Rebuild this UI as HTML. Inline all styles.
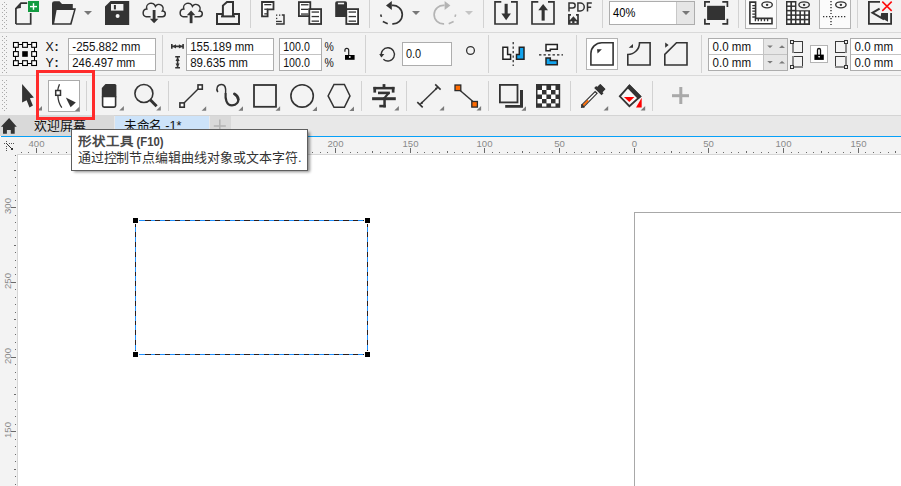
<!DOCTYPE html>
<html lang="zh-CN"><head><meta charset="utf-8">
<style>
html,body{margin:0;padding:0;width:901px;height:486px;overflow:hidden;background:#fff;}
body{position:relative;font-family:"Liberation Sans",sans-serif;}
svg{position:absolute;left:0;top:0;}
.t{font-family:"Liberation Sans",sans-serif;}
</style></head><body>
<svg width="901" height="486" viewBox="0 0 901 486" shape-rendering="crispEdges">
<defs>
<pattern id="grip" x="0" y="0" width="8" height="4" patternUnits="userSpaceOnUse">
<rect x="2" y="0" width="1" height="1" fill="#a9a9a9"/><rect x="6" y="0" width="1" height="1" fill="#a9a9a9"/><rect x="4" y="2" width="1" height="1" fill="#a9a9a9"/>
</pattern>
</defs>
<!-- toolbar backgrounds -->
<rect x="0" y="0" width="901" height="115" fill="#f3f3f3"/>
<rect x="0" y="32" width="901" height="1" fill="#d9d9d9"/>
<rect x="0" y="75" width="901" height="1" fill="#d9d9d9"/>
<rect x="0" y="2" width="8" height="28" fill="url(#grip)"/>
<rect x="0" y="36" width="8" height="37" fill="url(#grip)"/>
<rect x="0" y="79" width="8" height="33" fill="url(#grip)"/>

<!-- tab bar -->
<rect x="0" y="115" width="901" height="21" fill="#e8e8e8"/>
<rect x="0" y="115" width="114" height="21" fill="#d9d9d9"/>
<rect x="115" y="115" width="94" height="21" fill="#cde3f9"/>
<rect x="210" y="115" width="21" height="21" fill="#d9d9d9"/>
<rect x="114" y="115" width="787" height="1" fill="#d4d4d4"/>
<rect x="1" y="136" width="900" height="1" fill="#06a0f8"/>

<!-- rulers -->
<rect x="0" y="137" width="901" height="349" fill="#f3f3f3"/>
<rect x="18" y="155" width="883" height="331" fill="#ffffff"/>
<rect x="17" y="154" width="884" height="1" fill="#d6d6d6"/>
<rect x="17" y="154" width="1" height="332" fill="#d6d6d6"/>

<!-- page border -->
<rect x="634" y="212" width="267" height="1" fill="#a8a8a8"/>
<rect x="634" y="212" width="1" height="274" fill="#a8a8a8"/>


<!-- ROW 1 ICONS -->
<g shape-rendering="geometricPrecision">
<!-- new doc -->
<path d="M15.9,24 V8.6 L21,3.1 H27.2 M15.9,24 H30.7 V13" fill="none" stroke="#333" stroke-width="1.7"/>
<path d="M15.9,8.8 L20.9,3.4 V8 Z" fill="#333"/>
<rect x="28" y="1" width="11" height="11" fill="#129b40"/>
<rect x="30" y="5.9" width="7" height="1.4" fill="#fff"/>
<rect x="32.8" y="3.2" width="1.4" height="6.6" fill="#fff"/>
<!-- open folder -->
<path d="M52,3.6 Q52,1.2 54.5,1.2 H59.5 L62,4 H72.8 V8.3 H76 L71.5,24.8 H52 Z" fill="#333"/>
<path d="M56.6,9.9 H74 L70.2,23.2 H54.2 Z" fill="#f3f3f3"/>
<path d="M84,11 H92 L88,15 Z" fill="#777"/>
<!-- save -->
<path d="M110.6,1 H129.2 V24.9 H105 V6.6 Z" fill="#333"/>
<rect x="111" y="4" width="12.4" height="6.6" fill="#f3f3f3"/>
<rect x="113.9" y="5" width="2" height="4.4" fill="#333"/>
<circle cx="117.6" cy="16" r="2" fill="#f3f3f3"/>
<!-- cloud download -->
<path d="M150.6,16.7 H146.2 A3.9,3.9 0 0 1 146.8,9 A4.5,4.5 0 0 1 155.4,6.3 A4,4 0 0 1 162.4,10.9 A2.9,2.9 0 0 1 162.4,16.7 H157.4" fill="none" stroke="#333" stroke-width="1.5"/>
<rect x="152.7" y="10" width="2.8" height="9.5" fill="#333"/>
<path d="M149.8,18.8 H158.4 L154.1,23.3 Z" fill="#333"/>
<!-- cloud upload -->
<path d="M187.6,16.7 H183.2 A3.9,3.9 0 0 1 183.8,9 A4.5,4.5 0 0 1 192.4,6.3 A4,4 0 0 1 199.4,10.9 A2.9,2.9 0 0 1 199.4,16.7 H194.4" fill="none" stroke="#333" stroke-width="1.5"/>
<rect x="189.7" y="14.5" width="2.8" height="8.7" fill="#333"/>
<path d="M186.8,15.2 H195.4 L191.1,10.4 Z" fill="#333"/>
<!-- print -->
<rect x="217" y="14" width="22" height="10" fill="none" stroke="#333" stroke-width="2"/>
<path d="M222.9,16.3 V5.6 L227,1.9 H233 V16.3" fill="#f3f3f3" stroke="#333" stroke-width="2"/>
<rect x="221" y="15.4" width="14" height="2" fill="#333"/>
<!-- separator -->
<rect x="250" y="0" width="1" height="28" fill="#d2d2d2" shape-rendering="crispEdges"/>
<!-- cut -->
<path d="M262,2 H273.5 V9.3 H267.6 V16.4 H262 Z" fill="#fff" stroke="#333" stroke-width="1.8"/>
<rect x="264.3" y="4" width="7" height="1.3" fill="#333"/>
<rect x="264.3" y="8.6" width="3.5" height="1.3" fill="#333"/>
<rect x="264.3" y="13.2" width="3" height="1.3" fill="#333"/>
<rect x="276" y="14.5" width="1.3" height="1.3" fill="#333"/>
<rect x="279" y="14.5" width="1.3" height="1.3" fill="#333"/>
<rect x="276" y="17.8" width="1.3" height="1.3" fill="#333"/>
<path d="M281.8,15 H284 V24.1 H276" fill="none" stroke="#333" stroke-width="1.5"/>
<rect x="276" y="20.8" width="5.8" height="1.3" fill="#333"/>
<!-- copy -->
<rect x="298.9" y="2.1" width="11.4" height="14" fill="#fff" stroke="#333" stroke-width="1.8"/>
<rect x="301" y="4.1" width="7.5" height="1.3" fill="#333"/>
<rect x="301" y="8.7" width="7.5" height="1.3" fill="#333"/>
<rect x="301" y="13.4" width="7.5" height="1.3" fill="#333"/>
<rect x="309.3" y="9.1" width="11.8" height="14.9" fill="#fff" stroke="#333" stroke-width="1.8"/>
<rect x="311.6" y="11.4" width="7.4" height="1.3" fill="#333"/>
<rect x="311.6" y="15.9" width="7.4" height="1.3" fill="#333"/>
<rect x="311.6" y="20.5" width="7.4" height="1.3" fill="#333"/>
<!-- paste -->
<path d="M335.2,3 Q335.2,1.2 337,1.2 H345.2 Q347,1.2 347,3 V16.9 H335.2 Z" fill="#333"/>
<rect x="337.9" y="2.7" width="6.2" height="1.6" fill="#f3f3f3"/>
<rect x="346.3" y="9.1" width="11.8" height="14.9" fill="#fff" stroke="#333" stroke-width="1.8"/>
<rect x="348.6" y="11.4" width="7.4" height="1.3" fill="#333"/>
<rect x="348.6" y="15.9" width="7.4" height="1.3" fill="#333"/>
<rect x="348.6" y="20.5" width="7.4" height="1.3" fill="#333"/>
<rect x="369" y="0" width="1" height="28" fill="#d2d2d2" shape-rendering="crispEdges"/>
<!-- undo -->
<path d="M391.8,5.4 A9.3,9.3 0 1 1 392.3,23.9" fill="none" stroke="#333" stroke-width="1.7"/>
<path d="M382.8,21.5 L387.7,23.8 M380.7,14.5 L381.4,16.9" fill="none" stroke="#333" stroke-width="1.6"/>
<path d="M386,5.5 L391.8,0.9 V9.9 Z" fill="#333"/>
<path d="M412,11 H420 L416,15 Z" fill="#777"/>
<!-- redo (grey) -->
<path d="M444.6,5.4 A9.3,9.3 0 1 0 444.1,23.9" fill="none" stroke="#b4b4b4" stroke-width="1.7"/>
<path d="M453.6,21.5 L448.7,23.8 M455.7,14.5 L455,16.9" fill="none" stroke="#b4b4b4" stroke-width="1.6"/>
<path d="M450.4,5.5 L444.6,0.9 V9.9 Z" fill="#b4b4b4"/>
<path d="M465,11 H473 L469,15 Z" fill="#c4c4c4"/>
<rect x="483" y="0" width="1" height="28" fill="#d2d2d2" shape-rendering="crispEdges"/>
<!-- import -->
<path d="M501.3,1.9 H495 V24 H517 V1.9 H511" fill="none" stroke="#333" stroke-width="1.65"/>
<rect x="504.6" y="3.8" width="3.1" height="11" fill="#333"/>
<path d="M501.4,13.6 H510.9 L506.15,20.3 Z" fill="#333"/>
<!-- export -->
<path d="M538.3,1.9 H532 V24 H554 V1.9 H548" fill="none" stroke="#333" stroke-width="1.65"/>
<rect x="541.6" y="9.5" width="3.1" height="11.1" fill="#333"/>
<path d="M538.3,10.2 H548 L543.15,3.9 Z" fill="#333"/>
</g>

<!-- ROW 1 part 2 -->
<g shape-rendering="geometricPrecision">
<!-- PDF -->
<path d="M569,11.6 V3.1 H572.6 A2.55,2.5 0 0 1 572.6,8.1 H569 M577.9,11 V3.1 H580.3 A3.95,3.95 0 0 1 580.3,11 Z M587.5,11.6 V3.1 H591.8 M587.5,7.3 H591.2" fill="none" stroke="#333" stroke-width="1.5"/>
<path d="M571,14.9 H568.9 V24 H578 V14.9 H576" fill="none" stroke="#333" stroke-width="1.7"/>
<path d="M569.8,20.2 L573.4,16.3 L577,20.2 Z" fill="#333"/><rect x="569" y="20" width="9" height="3.6" fill="#333"/>
<rect x="570.5" y="21.3" width="1.7" height="1.7" fill="#f3f3f3"/>
<rect x="574.5" y="21.3" width="2" height="1.7" fill="#f3f3f3"/>
<rect x="602" y="0" width="1" height="28" fill="#d2d2d2" shape-rendering="crispEdges"/>
<!-- zoom combo -->
<rect x="609.5" y="1.5" width="85" height="23" fill="#fff" stroke="#adadad" stroke-width="1" shape-rendering="crispEdges"/>
<rect x="677" y="2" width="17" height="22" fill="#e6e6e6" shape-rendering="crispEdges"/>
<rect x="676" y="2" width="1" height="22" fill="#c8c8c8" shape-rendering="crispEdges"/>
<path d="M682,11.1 H690 L686,15 Z" fill="#777"/>
<text x="613" y="17.2" font-size="12.6" fill="#000" textLength="22.3" lengthAdjust="spacingAndGlyphs" class="t">40%</text>
<!-- full page -->
<path d="M710,1.9 H704.9 V7 M722.3,1.9 H727.4 V7 M704.9,18.8 V23.9 H710 M727.4,18.8 V23.9 H722.3" fill="none" stroke="#333" stroke-width="1.7"/>
<rect x="707.1" y="5.8" width="17.9" height="14.2" fill="#333"/>
<rect x="738" y="0" width="1" height="28" fill="#d2d2d2" shape-rendering="crispEdges"/>
<!-- ruler button -->
<rect x="745.5" y="-2" width="31" height="30.5" fill="#fbfbfb" stroke="#b4b4b4" stroke-width="1" shape-rendering="crispEdges"/>
<path d="M749.9,2.1 H755.6 V18.4 H772 V23.8 H749.9 Z" fill="#fff" stroke="#333" stroke-width="1.6"/>
<path d="M752.3,5.6 H755.6 M752.3,8.4 H755.6 M752.3,11.2 H755.6 M752.3,14.1 H755.6 M752.3,17 H755.6 M755.4,18.4 V21.3 M758.3,18.4 V21.3 M761.3,18.4 V21.3 M764.5,18.4 V21.3 M767.6,18.4 V21.3" fill="none" stroke="#333" stroke-width="1.3"/>
<ellipse cx="767.1" cy="4.85" rx="5.2" ry="3" fill="none" stroke="#333" stroke-width="1.4"/>
<circle cx="767.1" cy="4.85" r="1.2" fill="#333"/>
<!-- grid -->
<path d="M786,1.1 H796.4 V10.3 H810 V24.9 H786 Z" fill="#333"/>
<g fill="#fff"><rect x="787.45" y="2.55" width="2.9" height="2.9"/><rect x="792.05" y="2.55" width="2.9" height="2.9"/><rect x="787.45" y="6.95" width="2.9" height="2.9"/><rect x="792.05" y="6.95" width="2.9" height="2.9"/><rect x="787.45" y="11.45" width="2.9" height="2.9"/><rect x="792.05" y="11.45" width="2.9" height="2.9"/><rect x="796.45" y="11.45" width="2.9" height="2.9"/><rect x="800.95" y="11.45" width="2.9" height="2.9"/><rect x="805.35" y="11.45" width="2.9" height="2.9"/><rect x="787.45" y="15.85" width="2.9" height="2.9"/><rect x="792.05" y="15.85" width="2.9" height="2.9"/><rect x="796.45" y="15.85" width="2.9" height="2.9"/><rect x="800.95" y="15.85" width="2.9" height="2.9"/><rect x="805.35" y="15.85" width="2.9" height="2.9"/><rect x="787.45" y="20.35" width="2.9" height="2.9"/><rect x="792.05" y="20.35" width="2.9" height="2.9"/><rect x="796.45" y="20.35" width="2.9" height="2.9"/><rect x="800.95" y="20.35" width="2.9" height="2.9"/><rect x="805.35" y="20.35" width="2.9" height="2.9"/></g>
<ellipse cx="804.1" cy="4.85" rx="5.2" ry="3" fill="#f3f3f3" stroke="#333" stroke-width="1.4"/>
<circle cx="804.1" cy="4.85" r="1.2" fill="#333"/>
<!-- guidelines button -->
<rect x="819.5" y="-2" width="31" height="30.5" fill="#fbfbfb" stroke="#b4b4b4" stroke-width="1" shape-rendering="crispEdges"/>
<path d="M831,1 V14 M831,18 V25" fill="none" stroke="#333" stroke-width="1.4" stroke-dasharray="1.3,1.7"/>
<path d="M823,16.6 H847" fill="none" stroke="#333" stroke-width="1.3" stroke-dasharray="1.3,1.7"/>
<ellipse cx="840.9" cy="4.85" rx="5.2" ry="3" fill="none" stroke="#333" stroke-width="1.4"/>
<circle cx="840.9" cy="4.85" r="1.2" fill="#333"/>
<rect x="857" y="0" width="1" height="28" fill="#d2d2d2" shape-rendering="crispEdges"/>
</g>

<g shape-rendering="geometricPrecision">
<path d="M880,1.9 H868.9 V23.9 H891.1 V13" fill="none" stroke="#333" stroke-width="1.8"/>
<path d="M879.6,8.7 L872.4,12.8 L884,19.3" fill="none" stroke="#333" stroke-width="1.9"/>
<path d="M881.2,13.1 H888 V21.8 L880.5,17.6 Z" fill="#333"/>
<path d="M882.3,1.6 L891.7,10.9 M891.7,1.6 L882.3,10.9" stroke="#ff0a0a" stroke-width="1.5"/>
</g>

<!-- ROW 2 -->
<g shape-rendering="geometricPrecision">
<!-- reference point icon -->
<path d="M16,44.5 H34 M16,63.5 H34 M15.5,45 V63 M34.5,45 V63" stroke="#000" stroke-width="1" fill="none" shape-rendering="crispEdges"/>
<g fill="#fff" stroke="#000" stroke-width="1.1">
<rect x="13.5" y="42.5" width="4.8" height="4.8"/><rect x="22.6" y="42.5" width="4.8" height="4.8"/><rect x="31.7" y="42.5" width="4.8" height="4.8"/>
<rect x="13.5" y="51.6" width="4.8" height="4.8"/><rect x="31.7" y="51.6" width="4.8" height="4.8"/>
<rect x="13.5" y="60.7" width="4.8" height="4.8"/><rect x="22.6" y="60.7" width="4.8" height="4.8"/><rect x="31.7" y="60.7" width="4.8" height="4.8"/>
</g>
<rect x="22.2" y="51.2" width="5.6" height="5.6" fill="#000"/>
<text x="45.6" y="51" font-size="12.3" fill="#111" class="t">X</text>
<text x="54.6" y="51" font-size="12.3" font-weight="bold" fill="#111" class="t">:</text>
<text x="45.6" y="67" font-size="12.3" fill="#111" class="t">Y</text>
<text x="54.6" y="67" font-size="12.3" font-weight="bold" fill="#111" class="t">:</text>
</g>
<g shape-rendering="crispEdges">
<!-- XY input -->
<rect x="68.5" y="38.5" width="87" height="31.5" fill="#fff" stroke="#adadad"/>
<rect x="69" y="54" width="86" height="1" fill="#c3c3c3"/>
<rect x="162" y="35" width="1" height="38" fill="#d2d2d2"/>
<rect x="186.5" y="38.5" width="87" height="31.5" fill="#fff" stroke="#adadad"/>
<rect x="187" y="54" width="86" height="1" fill="#c3c3c3"/>
<rect x="279.5" y="38.5" width="42" height="31.5" fill="#fff" stroke="#adadad"/>
<rect x="280" y="54" width="41" height="1" fill="#c3c3c3"/>
<rect x="365" y="35" width="1" height="38" fill="#d2d2d2"/>
<rect x="402.5" y="42.5" width="49" height="23" fill="#fff" stroke="#adadad"/>
<rect x="488" y="35" width="1" height="38" fill="#d2d2d2"/>
<rect x="576" y="35" width="1" height="38" fill="#d2d2d2"/>
<rect x="586.5" y="38.5" width="31" height="31" fill="#fff" stroke="#b4b4b4"/>
<rect x="701" y="35" width="1" height="38" fill="#d2d2d2"/>
<rect x="708.5" y="38.5" width="79" height="31.5" fill="#fff" stroke="#adadad"/>
<rect x="764" y="39" width="23" height="31" fill="#e6e6e6"/>
<rect x="763" y="39" width="1" height="31" fill="#c3c3c3"/>
<rect x="709" y="54" width="78" height="1" fill="#c3c3c3"/>
<rect x="810.5" y="45.5" width="17" height="17" fill="#fff" stroke="#b4b4b4"/>
<rect x="850.5" y="38.5" width="60" height="31.5" fill="#fff" stroke="#adadad"/>
<rect x="851" y="54" width="60" height="1" fill="#c3c3c3"/>
</g>
<g class="t" font-size="12" fill="#111">
<text x="72.3" y="50.6" textLength="68" lengthAdjust="spacingAndGlyphs">-255.882 mm</text>
<text x="72.3" y="66.7" textLength="63" lengthAdjust="spacingAndGlyphs">246.497 mm</text>
<text x="190.2" y="50.6" textLength="63.6" lengthAdjust="spacingAndGlyphs">155.189 mm</text>
<text x="190.2" y="66.7" textLength="57.7" lengthAdjust="spacingAndGlyphs">89.635 mm</text>
<text x="283.2" y="50.6" textLength="26.6" lengthAdjust="spacingAndGlyphs">100.0</text>
<text x="283.2" y="66.7" textLength="26.6" lengthAdjust="spacingAndGlyphs">100.0</text>
<text x="324.6" y="51" textLength="9.3" lengthAdjust="spacingAndGlyphs">%</text>
<text x="324.6" y="66.8" textLength="9.3" lengthAdjust="spacingAndGlyphs">%</text>
<text x="406" y="57.9" textLength="15.2" lengthAdjust="spacingAndGlyphs">0.0</text>
<text x="712.5" y="50.6" textLength="38.5" lengthAdjust="spacingAndGlyphs">0.0 mm</text>
<text x="712.5" y="66.7" textLength="38.5" lengthAdjust="spacingAndGlyphs">0.0 mm</text>
<text x="854.5" y="50.6" textLength="38.5" lengthAdjust="spacingAndGlyphs">0.0 mm</text>
<text x="854.5" y="66.7" textLength="38.5" lengthAdjust="spacingAndGlyphs">0.0 mm</text>
</g>
<g shape-rendering="geometricPrecision">
<!-- W/H icons -->
<path d="M171.8,44 V48.8 M183.1,44 V48.8 M172,46.4 H183" stroke="#333" stroke-width="1.6" fill="none"/>
<path d="M172.5,46.4 L176,44.3 V48.5 Z M182.4,46.4 L178.9,44.3 V48.5 Z" fill="#333"/>
<path d="M175.2,56.8 H180 M175.2,67.8 H180 M177.6,57 V67.6" stroke="#333" stroke-width="1.6" fill="none"/>
<path d="M177.6,57.6 L175.5,61 H179.7 Z M177.6,67 L175.5,63.6 H179.7 Z" fill="#333"/>
<!-- lock open -->
<path d="M344.9,51.8 V50.3 A1.9,1.9 0 0 1 348.7,50.3 V55.5" fill="none" stroke="#222" stroke-width="1.2"/>
<rect x="345" y="55" width="9.6" height="4.8" fill="#000"/>
<circle cx="349.8" cy="57" r="0.9" fill="#fff"/>
<!-- rotate -->
<path d="M381.5,56.3 A6.6,6.6 0 1 1 383.4,59.3" fill="none" stroke="#333" stroke-width="1.4"/>
<path d="M379.2,54.1 H384.3 L381.5,57.6 Z" fill="#333"/>
<circle cx="470.5" cy="50.5" r="3.9" fill="none" stroke="#333" stroke-width="1.3"/>
<!-- mirror H -->
<path d="M502.9,47.3 H507.6 V54.5 H510.6 V59.2 H502.9 Z" fill="#fff" stroke="#222" stroke-width="1.5"/>
<path d="M524,47.3 H519.3 V54.5 H516.5 V59.2 H524 Z" fill="#12a4ee" stroke="#222" stroke-width="1.5"/>
<path d="M513.2,42 V66" stroke="#222" stroke-width="1.2" stroke-dasharray="2.2,2.3" fill="none"/>
<!-- mirror V -->
<path d="M546,44.4 H557.3 V49.3 H550.3 V50.8 H546 Z" fill="#fff" stroke="#222" stroke-width="1.5"/>
<path d="M546,58 H550.3 V60.5 H557.3 V64.8 H546 Z" fill="#12a4ee" stroke="#222" stroke-width="1.5"/>
<path d="M539,54.8 H563" stroke="#222" stroke-width="1.2" stroke-dasharray="2.4,2.1" fill="none"/>
<!-- corner round -->
<path d="M590.9,65 V53.6 A10.9,10.9 0 0 1 601.8,42.7 H613.1 V65 Z" fill="none" stroke="#333" stroke-width="1.6"/>
<path d="M597,49.3 H601.9 L597.6,53.5 Z" fill="#333"/>
<!-- scallop -->
<path d="M627.8,65 V54.5 A11.7,11.7 0 0 0 639.5,42.7 H650.1 V65 Z" fill="none" stroke="#333" stroke-width="1.6"/>
<path d="M628.7,47.8 H633 V43.9 Z" fill="#333"/>
<!-- chamfer -->
<path d="M664.8,65 V54.4 L676.5,42.7 H687 V65 Z" fill="none" stroke="#333" stroke-width="1.6"/>
<path d="M665.2,42.6 L668.6,45.1 L665.2,47.7 Z" fill="#333"/>
<!-- spinner arrows -->
<path d="M767.2,45.4 H772.8 L770,48 Z M779,48 H785 L782,45.3 Z M767.2,61 H772.8 L770,63.6 Z M779,63.6 H785 L782,60.9 Z" fill="#7a7a7a"/>
<!-- corner icons left -->
<g shape-rendering="crispEdges">
<rect x="792" y="41" width="11" height="1" fill="#3a3a3a"/><rect x="802" y="41" width="1" height="12" fill="#3a3a3a"/><rect x="792" y="52" width="11" height="1" fill="#3a3a3a"/><rect x="792" y="41" width="2" height="12" fill="#8c8c8c"/>
<rect x="790.5" y="40.5" width="3" height="3" fill="#eee" stroke="#333"/>
<rect x="792" y="56" width="11" height="1" fill="#3a3a3a"/><rect x="802" y="56" width="1" height="12" fill="#3a3a3a"/><rect x="792" y="66" width="11" height="2" fill="#8c8c8c"/><rect x="792" y="56" width="2" height="12" fill="#8c8c8c"/>
<rect x="790.5" y="65.5" width="3" height="3" fill="#eee" stroke="#333"/>
</g>
<!-- lock closed -->
<path d="M817.5,55.5 V50 A1.5,1.5 0 0 1 820.5,50 V55.5" fill="none" stroke="#111" stroke-width="1.3"/>
<rect x="814.4" y="54.6" width="9.4" height="5.3" fill="#000"/>
<path d="M818.1,56 H820.1 L819.1,58.3 Z" fill="#fff"/>
<!-- corner icons right -->
<g shape-rendering="crispEdges">
<rect x="835" y="41" width="11" height="1" fill="#3a3a3a"/><rect x="835" y="41" width="1" height="12" fill="#3a3a3a"/><rect x="835" y="52" width="11" height="1" fill="#3a3a3a"/><rect x="845" y="41" width="2" height="12" fill="#8c8c8c"/>
<rect x="844.5" y="40.5" width="3" height="3" fill="#eee" stroke="#333"/>
<rect x="835" y="56" width="11" height="1" fill="#3a3a3a"/><rect x="835" y="56" width="1" height="12" fill="#3a3a3a"/><rect x="835" y="66" width="12" height="2" fill="#8c8c8c"/><rect x="845" y="56" width="2" height="12" fill="#8c8c8c"/>
<rect x="844.5" y="65.5" width="3" height="3" fill="#eee" stroke="#333"/>
</g>
</g>

<!-- ROW 3 -->
<g shape-rendering="crispEdges">
<rect x="86" y="81" width="1" height="30" fill="#d2d2d2"/>
<rect x="168" y="81" width="1" height="30" fill="#d2d2d2"/>
<rect x="361" y="81" width="1" height="30" fill="#d2d2d2"/>
<rect x="406" y="81" width="1" height="30" fill="#d2d2d2"/>
<rect x="488" y="81" width="1" height="30" fill="#d2d2d2"/>
<rect x="570" y="81" width="1" height="30" fill="#d2d2d2"/>
<rect x="652" y="81" width="1" height="30" fill="#d2d2d2"/>
<rect x="48.5" y="80.5" width="31" height="31" fill="#fff" stroke="#ababab"/>
</g>
<g shape-rendering="geometricPrecision">
<!-- pick -->
<path d="M22.1,83.9 L33.9,97.6 L29.9,98.3 L32.9,105.6 L29.5,107.4 L26.6,100.3 L22.1,102.5 Z" fill="#333"/>
<path d="M37.4,110.6 L42.0,106.1 V110.6 Z" fill="#7b7b7b"/>
<!-- shape tool -->
<path d="M59.5,84.3 C58.8,86 58,88 57.8,90" fill="none" stroke="#333" stroke-width="1.3"/>
<path d="M57.9,95.8 C58,100 59.5,104.5 61.8,107.6" fill="none" stroke="#333" stroke-width="1.3"/>
<rect x="55.7" y="90.5" width="4.8" height="4.8" fill="#fff" stroke="#333" stroke-width="1.5"/>
<path d="M65.8,97.6 L75.8,102.4 L70.6,107.3 Z" fill="#333"/>
<path d="M74.9,111 L79.5,106.5 V111 Z" fill="#7b7b7b"/>
<!-- eraser -->
<path d="M102.6,96.5 V105.6 Q102.6,107.1 104.1,107.1 H114.1 Q115.6,107.1 115.6,105.6 V96.5" fill="#fff" stroke="#333" stroke-width="1.6"/>
<path d="M105.5,84.1 H114.9 Q116.4,84.1 116.4,85.6 V97.2 H101.8 V88.1 Z" fill="#333"/>
<path d="M119.3,110.6 L123.89999999999999,106.1 V110.6 Z" fill="#7b7b7b"/>
<!-- zoom -->
<circle cx="143.9" cy="93.5" r="9" fill="none" stroke="#333" stroke-width="1.6"/>
<path d="M150.2,99.8 L156.6,106.2" stroke="#333" stroke-width="3"/>
<path d="M156.2,110.6 L160.79999999999998,106.1 V110.6 Z" fill="#7b7b7b"/>
<!-- freehand -->
<path d="M183.5,103.6 L198.6,88.5" stroke="#333" stroke-width="1.4"/>
<rect x="179.9" y="102.9" width="4.4" height="4.3" fill="#fff" stroke="#333" stroke-width="1.6"/>
<rect x="198" y="84.9" width="4.3" height="4.3" fill="#fff" stroke="#333" stroke-width="1.6"/>
<path d="M201.6,110.8 L206.2,106.3 V110.8 Z" fill="#7b7b7b"/>
<!-- artistic -->
<path d="M217.8,92.2 C215.6,88.5 217.5,84.6 221.5,84.6 C225.5,84.6 226,88.5 225.6,93" fill="none" stroke="#333" stroke-width="1.5"/>
<path d="M225.6,93 C225.2,98 226,105.3 232,105.3 C237,105.3 238.5,101.5 238.3,99.3" fill="none" stroke="#333" stroke-width="2.2"/>
<path d="M238.3,99.3 C238,96.8 236.2,95 234.4,93.9" fill="none" stroke="#333" stroke-width="2.8" stroke-linecap="round"/>
<path d="M238.4,110.8 L243.0,106.3 V110.8 Z" fill="#7b7b7b"/>
<!-- rectangle -->
<rect x="254" y="85" width="22" height="21.8" fill="none" stroke="#333" stroke-width="1.8"/>
<path d="M275.5,110.8 L280.1,106.3 V110.8 Z" fill="#7b7b7b"/>
<!-- ellipse -->
<circle cx="302.1" cy="95.9" r="11.2" fill="none" stroke="#333" stroke-width="1.6"/>
<path d="M312.4,110.9 L317.0,106.4 V110.9 Z" fill="#7b7b7b"/>
<!-- polygon -->
<path d="M334,84.5 H344.4 L350,95.9 L344.4,107.3 H334 L328.1,95.9 Z" fill="none" stroke="#333" stroke-width="1.5"/>
<path d="M349.4,110.9 L354.0,106.4 V110.9 Z" fill="#7b7b7b"/>
<!-- text 字 -->
<g fill="#333">
<rect x="382.6" y="84.1" width="2.8" height="3.2"/>
<rect x="373.4" y="86.9" width="21.1" height="2.5"/>
<rect x="373.4" y="86.9" width="2.7" height="5.7"/>
<rect x="391.8" y="86.9" width="2.7" height="5.7"/>
<rect x="378" y="91.6" width="11.9" height="2.6"/>
<path d="M387,93.3 L390,93.3 L385.8,98 L383.1,98 Z"/>
<rect x="372.1" y="97.2" width="23.7" height="3"/>
<rect x="383.3" y="97.2" width="2.5" height="10.2"/>
<rect x="379.3" y="104.8" width="6.5" height="2.6"/>
</g>
<path d="M394.3,110.6 L398.90000000000003,106.1 V110.6 Z" fill="#7b7b7b"/>
<!-- dimension -->
<path d="M420,104.6 L438,86.9" stroke="#333" stroke-width="1.4"/><circle cx="421.8" cy="102.9" r="1.1" fill="#333"/><circle cx="436.2" cy="88.6" r="1.1" fill="#333"/>
<path d="M435.2,84.4 L440.6,89.6 M417.3,102.2 L422.7,107.4" stroke="#333" stroke-width="1.6"/>
<path d="M439.5,110.5 L444.1,106.0 V110.5 Z" fill="#7b7b7b"/>
<!-- connector -->
<path d="M459,89.5 L473.5,102" stroke="#333" stroke-width="1.5"/>
<rect x="455" y="85" width="5.8" height="5.6" fill="#ff6a00" stroke="#2b2b2b" stroke-width="1.3"/>
<rect x="471.8" y="101.5" width="5.6" height="5.6" fill="#ff6a00" stroke="#2b2b2b" stroke-width="1.3"/>
<path d="M476.5,110.5 L481.1,106.0 V110.5 Z" fill="#7b7b7b"/>
<!-- drop shadow -->
<rect x="499.9" y="84.9" width="17.6" height="17.5" fill="#f3f3f3" stroke="#333" stroke-width="1.8"/>
<path d="M520,90 H523 V107.8 H505.2 V105 H520 Z" fill="#333"/>
<path d="M521.4,110.8 L526.0,106.3 V110.8 Z" fill="#7b7b7b"/>
<!-- checker -->
<rect x="536" y="84" width="24.2" height="23.8" fill="#333"/>
<g fill="#fff">
<rect x="542" y="85.6" width="4.4" height="4.4"/><rect x="551.1" y="85.6" width="4.4" height="4.4"/>
<rect x="537.5" y="90" width="4.5" height="4.5"/><rect x="546.5" y="90" width="4.5" height="4.5"/><rect x="555.5" y="90" width="3.2" height="4.5"/>
<rect x="542" y="94.5" width="4.4" height="4.5"/><rect x="551.1" y="94.5" width="4.4" height="4.5"/>
<rect x="537.5" y="99" width="4.5" height="4.4"/><rect x="546.5" y="99" width="4.5" height="4.4"/><rect x="555.5" y="99" width="3.2" height="4.4"/>
<rect x="542" y="103.4" width="4.4" height="3.2"/><rect x="551.1" y="103.4" width="4.4" height="3.2"/>
</g>
<!-- eyedropper -->
<path d="M582.3,106.3 L596.5,92" stroke="#333" stroke-width="3.9"/>
<path d="M580.9,108 L581.3,104.1 L584.8,107.6 Z" fill="#333"/>
<path d="M583.7,104.9 L595.6,93" stroke="#fff" stroke-width="1.5"/>
<path d="M583.3,105.3 L588.2,100.4" stroke="#ff6a00" stroke-width="1.7"/>
<path d="M595.2,86.9 L602.5,94.2" stroke="#333" stroke-width="2.8"/>
<path d="M600.3,84.6 L604.8,89.1 L600.9,93 L596.4,88.5 Z" fill="#333" stroke="#333" stroke-width="1.2" stroke-linejoin="round"/>
<path d="M603.6,110.5 L608.2,106.0 V110.5 Z" fill="#7b7b7b"/>
<!-- fill -->
<path d="M629.4,85.6 L640.2,96.5 L629.4,106.2 L619.8,96.3 Z" fill="#f7f7f7" stroke="#333" stroke-width="1.8"/>
<path d="M626.8,87.6 L629.5,84.3 L641.7,96.4 L638.2,99.3 Z" fill="#333"/>
<path d="M623.9,97 H634.4 L629.3,102.1 Z" fill="#ff0000"/>
<path d="M641.7,97.8 V107.6 H636 Z" fill="#ff0000"/>
<path d="M640.6,110.5 L645.2,106.0 V110.5 Z" fill="#7b7b7b"/>
<!-- plus -->
<rect x="679.3" y="87" width="3" height="17" fill="#a9a9a9"/>
<rect x="672" y="94.2" width="17" height="3" fill="#a9a9a9"/>
</g>

<!-- TAB BAR -->
<g shape-rendering="geometricPrecision">
<path d="M9.1,117.9 L16.8,126.8 H14.7 V133.7 H10.8 V130 H6.9 V133.7 H3 V126.8 H0.9 Z" fill="#333"/>
<text x="34.3" y="129.8" font-size="13" fill="#111" class="t" textLength="51.7" lengthAdjust="spacingAndGlyphs">欢迎屏幕</text>
<text x="124" y="129.8" font-size="13" fill="#111" class="t" textLength="57.5" lengthAdjust="spacingAndGlyphs">未命名 -1*</text>
<rect x="219" y="119.5" width="1.6" height="13" fill="#b5b5b5"/>
<rect x="213.8" y="125.2" width="12" height="1.6" fill="#b5b5b5"/>
</g>
<!-- RULERS --><g shape-rendering="crispEdges"><rect x="21" y="152" width="1" height="1" fill="#6a6a6a"/><rect x="28" y="152" width="1" height="1" fill="#6a6a6a"/><rect x="36" y="148" width="1" height="5" fill="#6a6a6a"/><rect x="43" y="152" width="1" height="1" fill="#6a6a6a"/><rect x="51" y="152" width="1" height="1" fill="#6a6a6a"/><rect x="58" y="152" width="1" height="1" fill="#6a6a6a"/><rect x="66" y="152" width="1" height="1" fill="#6a6a6a"/><rect x="73" y="151" width="1" height="2" fill="#6a6a6a"/><rect x="81" y="152" width="1" height="1" fill="#6a6a6a"/><rect x="88" y="152" width="1" height="1" fill="#6a6a6a"/><rect x="96" y="152" width="1" height="1" fill="#6a6a6a"/><rect x="103" y="152" width="1" height="1" fill="#6a6a6a"/><rect x="111" y="148" width="1" height="5" fill="#6a6a6a"/><rect x="118" y="152" width="1" height="1" fill="#6a6a6a"/><rect x="126" y="152" width="1" height="1" fill="#6a6a6a"/><rect x="133" y="152" width="1" height="1" fill="#6a6a6a"/><rect x="141" y="152" width="1" height="1" fill="#6a6a6a"/><rect x="148" y="151" width="1" height="2" fill="#6a6a6a"/><rect x="155" y="152" width="1" height="1" fill="#6a6a6a"/><rect x="163" y="152" width="1" height="1" fill="#6a6a6a"/><rect x="170" y="152" width="1" height="1" fill="#6a6a6a"/><rect x="178" y="152" width="1" height="1" fill="#6a6a6a"/><rect x="185" y="148" width="1" height="5" fill="#6a6a6a"/><rect x="193" y="152" width="1" height="1" fill="#6a6a6a"/><rect x="200" y="152" width="1" height="1" fill="#6a6a6a"/><rect x="208" y="152" width="1" height="1" fill="#6a6a6a"/><rect x="215" y="152" width="1" height="1" fill="#6a6a6a"/><rect x="223" y="151" width="1" height="2" fill="#6a6a6a"/><rect x="230" y="152" width="1" height="1" fill="#6a6a6a"/><rect x="238" y="152" width="1" height="1" fill="#6a6a6a"/><rect x="245" y="152" width="1" height="1" fill="#6a6a6a"/><rect x="253" y="152" width="1" height="1" fill="#6a6a6a"/><rect x="260" y="148" width="1" height="5" fill="#6a6a6a"/><rect x="268" y="152" width="1" height="1" fill="#6a6a6a"/><rect x="275" y="152" width="1" height="1" fill="#6a6a6a"/><rect x="282" y="152" width="1" height="1" fill="#6a6a6a"/><rect x="290" y="152" width="1" height="1" fill="#6a6a6a"/><rect x="297" y="151" width="1" height="2" fill="#6a6a6a"/><rect x="305" y="152" width="1" height="1" fill="#6a6a6a"/><rect x="312" y="152" width="1" height="1" fill="#6a6a6a"/><rect x="320" y="152" width="1" height="1" fill="#6a6a6a"/><rect x="327" y="152" width="1" height="1" fill="#6a6a6a"/><rect x="335" y="148" width="1" height="5" fill="#6a6a6a"/><rect x="342" y="152" width="1" height="1" fill="#6a6a6a"/><rect x="350" y="152" width="1" height="1" fill="#6a6a6a"/><rect x="357" y="152" width="1" height="1" fill="#6a6a6a"/><rect x="365" y="152" width="1" height="1" fill="#6a6a6a"/><rect x="372" y="151" width="1" height="2" fill="#6a6a6a"/><rect x="380" y="152" width="1" height="1" fill="#6a6a6a"/><rect x="387" y="152" width="1" height="1" fill="#6a6a6a"/><rect x="395" y="152" width="1" height="1" fill="#6a6a6a"/><rect x="402" y="152" width="1" height="1" fill="#6a6a6a"/><rect x="410" y="148" width="1" height="5" fill="#6a6a6a"/><rect x="417" y="152" width="1" height="1" fill="#6a6a6a"/><rect x="424" y="152" width="1" height="1" fill="#6a6a6a"/><rect x="432" y="152" width="1" height="1" fill="#6a6a6a"/><rect x="439" y="152" width="1" height="1" fill="#6a6a6a"/><rect x="447" y="151" width="1" height="2" fill="#6a6a6a"/><rect x="454" y="152" width="1" height="1" fill="#6a6a6a"/><rect x="462" y="152" width="1" height="1" fill="#6a6a6a"/><rect x="469" y="152" width="1" height="1" fill="#6a6a6a"/><rect x="477" y="152" width="1" height="1" fill="#6a6a6a"/><rect x="484" y="148" width="1" height="5" fill="#6a6a6a"/><rect x="492" y="152" width="1" height="1" fill="#6a6a6a"/><rect x="499" y="152" width="1" height="1" fill="#6a6a6a"/><rect x="507" y="152" width="1" height="1" fill="#6a6a6a"/><rect x="514" y="152" width="1" height="1" fill="#6a6a6a"/><rect x="522" y="151" width="1" height="2" fill="#6a6a6a"/><rect x="529" y="152" width="1" height="1" fill="#6a6a6a"/><rect x="537" y="152" width="1" height="1" fill="#6a6a6a"/><rect x="544" y="152" width="1" height="1" fill="#6a6a6a"/><rect x="552" y="152" width="1" height="1" fill="#6a6a6a"/><rect x="559" y="148" width="1" height="5" fill="#6a6a6a"/><rect x="566" y="152" width="1" height="1" fill="#6a6a6a"/><rect x="574" y="152" width="1" height="1" fill="#6a6a6a"/><rect x="581" y="152" width="1" height="1" fill="#6a6a6a"/><rect x="589" y="152" width="1" height="1" fill="#6a6a6a"/><rect x="596" y="151" width="1" height="2" fill="#6a6a6a"/><rect x="604" y="152" width="1" height="1" fill="#6a6a6a"/><rect x="611" y="152" width="1" height="1" fill="#6a6a6a"/><rect x="619" y="152" width="1" height="1" fill="#6a6a6a"/><rect x="626" y="152" width="1" height="1" fill="#6a6a6a"/><rect x="634" y="148" width="1" height="5" fill="#6a6a6a"/><rect x="641" y="152" width="1" height="1" fill="#6a6a6a"/><rect x="649" y="152" width="1" height="1" fill="#6a6a6a"/><rect x="656" y="152" width="1" height="1" fill="#6a6a6a"/><rect x="664" y="152" width="1" height="1" fill="#6a6a6a"/><rect x="671" y="151" width="1" height="2" fill="#6a6a6a"/><rect x="679" y="152" width="1" height="1" fill="#6a6a6a"/><rect x="686" y="152" width="1" height="1" fill="#6a6a6a"/><rect x="693" y="152" width="1" height="1" fill="#6a6a6a"/><rect x="701" y="152" width="1" height="1" fill="#6a6a6a"/><rect x="708" y="148" width="1" height="5" fill="#6a6a6a"/><rect x="716" y="152" width="1" height="1" fill="#6a6a6a"/><rect x="723" y="152" width="1" height="1" fill="#6a6a6a"/><rect x="731" y="152" width="1" height="1" fill="#6a6a6a"/><rect x="738" y="152" width="1" height="1" fill="#6a6a6a"/><rect x="746" y="151" width="1" height="2" fill="#6a6a6a"/><rect x="753" y="152" width="1" height="1" fill="#6a6a6a"/><rect x="761" y="152" width="1" height="1" fill="#6a6a6a"/><rect x="768" y="152" width="1" height="1" fill="#6a6a6a"/><rect x="776" y="152" width="1" height="1" fill="#6a6a6a"/><rect x="783" y="148" width="1" height="5" fill="#6a6a6a"/><rect x="791" y="152" width="1" height="1" fill="#6a6a6a"/><rect x="798" y="152" width="1" height="1" fill="#6a6a6a"/><rect x="806" y="152" width="1" height="1" fill="#6a6a6a"/><rect x="813" y="152" width="1" height="1" fill="#6a6a6a"/><rect x="821" y="151" width="1" height="2" fill="#6a6a6a"/><rect x="828" y="152" width="1" height="1" fill="#6a6a6a"/><rect x="835" y="152" width="1" height="1" fill="#6a6a6a"/><rect x="843" y="152" width="1" height="1" fill="#6a6a6a"/><rect x="850" y="152" width="1" height="1" fill="#6a6a6a"/><rect x="858" y="148" width="1" height="5" fill="#6a6a6a"/><rect x="865" y="152" width="1" height="1" fill="#6a6a6a"/><rect x="873" y="152" width="1" height="1" fill="#6a6a6a"/><rect x="880" y="152" width="1" height="1" fill="#6a6a6a"/><rect x="888" y="152" width="1" height="1" fill="#6a6a6a"/><rect x="895" y="151" width="1" height="2" fill="#6a6a6a"/><rect x="15" y="484" width="1" height="1" fill="#6a6a6a"/><rect x="15" y="476" width="1" height="1" fill="#6a6a6a"/><rect x="14" y="469" width="2" height="1" fill="#6a6a6a"/><rect x="15" y="461" width="1" height="1" fill="#6a6a6a"/><rect x="15" y="454" width="1" height="1" fill="#6a6a6a"/><rect x="15" y="446" width="1" height="1" fill="#6a6a6a"/><rect x="15" y="439" width="1" height="1" fill="#6a6a6a"/><rect x="11" y="431" width="5" height="1" fill="#6a6a6a"/><rect x="15" y="424" width="1" height="1" fill="#6a6a6a"/><rect x="15" y="416" width="1" height="1" fill="#6a6a6a"/><rect x="15" y="409" width="1" height="1" fill="#6a6a6a"/><rect x="15" y="401" width="1" height="1" fill="#6a6a6a"/><rect x="14" y="394" width="2" height="1" fill="#6a6a6a"/><rect x="15" y="387" width="1" height="1" fill="#6a6a6a"/><rect x="15" y="379" width="1" height="1" fill="#6a6a6a"/><rect x="15" y="372" width="1" height="1" fill="#6a6a6a"/><rect x="15" y="364" width="1" height="1" fill="#6a6a6a"/><rect x="11" y="357" width="5" height="1" fill="#6a6a6a"/><rect x="15" y="349" width="1" height="1" fill="#6a6a6a"/><rect x="15" y="342" width="1" height="1" fill="#6a6a6a"/><rect x="15" y="334" width="1" height="1" fill="#6a6a6a"/><rect x="15" y="327" width="1" height="1" fill="#6a6a6a"/><rect x="14" y="319" width="2" height="1" fill="#6a6a6a"/><rect x="15" y="312" width="1" height="1" fill="#6a6a6a"/><rect x="15" y="304" width="1" height="1" fill="#6a6a6a"/><rect x="15" y="297" width="1" height="1" fill="#6a6a6a"/><rect x="15" y="289" width="1" height="1" fill="#6a6a6a"/><rect x="11" y="282" width="5" height="1" fill="#6a6a6a"/><rect x="15" y="274" width="1" height="1" fill="#6a6a6a"/><rect x="15" y="267" width="1" height="1" fill="#6a6a6a"/><rect x="15" y="260" width="1" height="1" fill="#6a6a6a"/><rect x="15" y="252" width="1" height="1" fill="#6a6a6a"/><rect x="14" y="245" width="2" height="1" fill="#6a6a6a"/><rect x="15" y="237" width="1" height="1" fill="#6a6a6a"/><rect x="15" y="230" width="1" height="1" fill="#6a6a6a"/><rect x="15" y="222" width="1" height="1" fill="#6a6a6a"/><rect x="15" y="215" width="1" height="1" fill="#6a6a6a"/><rect x="11" y="207" width="5" height="1" fill="#6a6a6a"/><rect x="15" y="200" width="1" height="1" fill="#6a6a6a"/><rect x="15" y="192" width="1" height="1" fill="#6a6a6a"/><rect x="15" y="185" width="1" height="1" fill="#6a6a6a"/><rect x="15" y="177" width="1" height="1" fill="#6a6a6a"/><rect x="14" y="170" width="2" height="1" fill="#6a6a6a"/><rect x="15" y="162" width="1" height="1" fill="#6a6a6a"/><rect x="15" y="155" width="1" height="1" fill="#6a6a6a"/></g><g class="t" shape-rendering="geometricPrecision"><text x="36.5" y="147" text-anchor="middle" font-size="9.6" fill="#8a8a8a">400</text><text x="111.5" y="147" text-anchor="middle" font-size="9.6" fill="#8a8a8a">350</text><text x="185.5" y="147" text-anchor="middle" font-size="9.6" fill="#8a8a8a">300</text><text x="260.5" y="147" text-anchor="middle" font-size="9.6" fill="#8a8a8a">250</text><text x="335.5" y="147" text-anchor="middle" font-size="9.6" fill="#8a8a8a">200</text><text x="410.5" y="147" text-anchor="middle" font-size="9.6" fill="#8a8a8a">150</text><text x="484.5" y="147" text-anchor="middle" font-size="9.6" fill="#8a8a8a">100</text><text x="559.5" y="147" text-anchor="middle" font-size="9.6" fill="#8a8a8a">50</text><text x="634.5" y="147" text-anchor="middle" font-size="9.6" fill="#8a8a8a">0</text><text x="708.5" y="147" text-anchor="middle" font-size="9.6" fill="#8a8a8a">50</text><text x="783.5" y="147" text-anchor="middle" font-size="9.6" fill="#8a8a8a">100</text><text x="858.5" y="147" text-anchor="middle" font-size="9.6" fill="#8a8a8a">150</text><text x="0" y="0" transform="translate(11,430.0) rotate(-90)" text-anchor="middle" font-size="9.6" fill="#8a8a8a">150</text><text x="0" y="0" transform="translate(11,356.0) rotate(-90)" text-anchor="middle" font-size="9.6" fill="#8a8a8a">200</text><text x="0" y="0" transform="translate(11,281.0) rotate(-90)" text-anchor="middle" font-size="9.6" fill="#8a8a8a">250</text><text x="0" y="0" transform="translate(11,206.0) rotate(-90)" text-anchor="middle" font-size="9.6" fill="#8a8a8a">300</text></g>
<g shape-rendering="crispEdges" fill="#555"><rect x="4" y="143" width="1" height="1"/><rect x="9" y="143" width="1" height="1"/><rect x="11" y="143" width="1" height="1"/><rect x="13" y="143" width="1" height="1"/><rect x="6" y="141" width="1" height="1"/><rect x="6" y="146" width="1" height="1"/><rect x="6" y="148" width="1" height="1"/><rect x="6" y="150" width="1" height="1"/><rect x="6" y="143" width="1" height="1" fill="#777"/></g><path d="M6.5,143.5 L11.8,148.8" stroke="#333" stroke-width="1.1"/><rect x="11" y="148" width="2.2" height="2.2" fill="#333"/>
<!-- SELECTION RECT -->
<g shape-rendering="crispEdges">
<rect x="139" y="220" width="225" height="1" fill="#1e90ff"/>
<rect x="139" y="354" width="225" height="1" fill="#1e90ff"/>
<rect x="135" y="224" width="1" height="127" fill="#1e90ff"/>
<rect x="367" y="224" width="1" height="127" fill="#1e90ff"/>
</g>
<g>
<path d="M145.4,220.5 H364" stroke="#2a1e1e" stroke-width="1" stroke-dasharray="5.1,4.8"/>
<path d="M145.4,354.5 H364" stroke="#2a1e1e" stroke-width="1" stroke-dasharray="5.1,4.8"/>
<path d="M135.5,224 V351" stroke="#2a1e1e" stroke-width="1" stroke-dasharray="4.9,4.9" stroke-dashoffset="1.5"/>
<path d="M367.5,224 V351" stroke="#2a1e1e" stroke-width="1" stroke-dasharray="4.9,4.9" stroke-dashoffset="1.5"/>
</g>
<g shape-rendering="crispEdges" fill="#000">
<rect x="133" y="218" width="5" height="5"/>
<rect x="365" y="218" width="5" height="5"/>
<rect x="133" y="352" width="5" height="5"/>
<rect x="365" y="352" width="5" height="5"/>
</g>
<!-- RED BOX -->
<rect x="37.5" y="71.5" width="56" height="46.5" fill="none" stroke="#ff2b2b" stroke-width="3" shape-rendering="crispEdges"/>

<!-- TOOLTIP -->
<defs><filter id="sh" x="-10%" y="-30%" width="120%" height="160%"><feGaussianBlur stdDeviation="1.6"/></filter></defs>
<rect x="74" y="132" width="236" height="40" fill="#000" opacity="0.45" filter="url(#sh)"/>
<g shape-rendering="crispEdges">
<rect x="71.5" y="129.5" width="236" height="40.5" fill="#fff" stroke="#5e5e5e"/>
</g>
<g class="t" shape-rendering="geometricPrecision">
<text x="77.6" y="145.6" font-size="12.5" font-weight="bold" fill="#4a4a4a" textLength="56" lengthAdjust="spacingAndGlyphs">形状工具</text>
<text x="136.5" y="145.6" font-size="12" font-weight="bold" fill="#444" textLength="27" lengthAdjust="spacingAndGlyphs">(F10)</text>
<text x="77.6" y="161.6" font-size="13" fill="#333" textLength="224" lengthAdjust="spacingAndGlyphs">通过控制节点编辑曲线对象或文本字符.</text>
</g>
</svg>
</body></html>
